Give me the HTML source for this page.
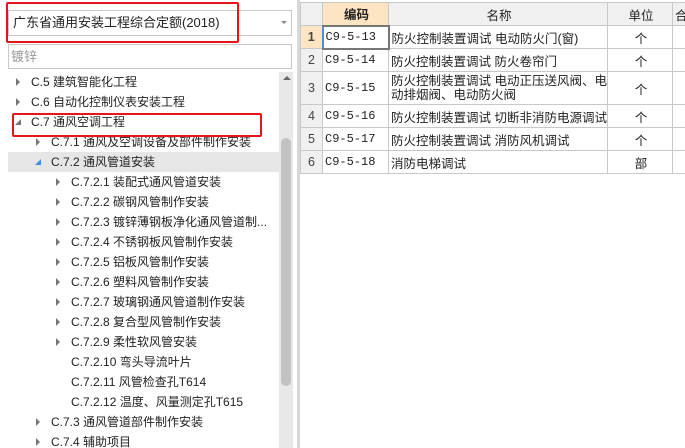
<!DOCTYPE html>
<html><head><meta charset="utf-8"><style>
*{margin:0;padding:0;box-sizing:border-box}
body{width:685px;height:448px;overflow:hidden;background:#fff;font-family:"Liberation Sans","Noto Sans CJK SC",sans-serif;font-size:12px;color:#222;position:relative}
.abs{position:absolute}
.tr{position:absolute;left:0;width:279px;height:20px;line-height:20px;white-space:nowrap}
.ar{position:absolute;top:6px;width:0;height:0;border-top:4px solid transparent;border-bottom:4px solid transparent;border-left:4px solid #777}
.dn{position:absolute;top:7px;width:0;height:0;border-left:6px solid transparent;border-bottom:6px solid #777}
table{border-collapse:collapse;position:absolute;left:300px;top:2px;table-layout:fixed;width:423px}
td,th{border:1px solid #c8c8c8;font-weight:normal;padding:0 0 0 2px;font-size:12.5px;white-space:nowrap;overflow:hidden}
th{background:#f0f0f0;height:23px;text-align:center}
td{height:23px}
td.n{background:#f0f0f0;text-align:center;color:#444;padding:0}
td.c{font-family:"Liberation Mono","Noto Sans CJK SC",monospace;font-size:12px}
td.u{text-align:center}
</style></head><body>
<div class="abs" style="left:8px;top:10px;width:284px;height:26px;border:1px solid #c8c8c8;line-height:24px;padding-left:4px;font-size:13px">广东省通用安装工程综合定额(2018)</div>
<div class="abs" style="left:281px;top:21px;border-left:3px solid transparent;border-right:3px solid transparent;border-top:3px solid #888"></div>
<div class="abs" style="left:6px;top:2px;width:233px;height:41px;border:2px solid #e8141c;border-radius:2px"></div>
<div class="abs" style="left:8px;top:44px;width:284px;height:25px;border:1px solid #c8c8c8;line-height:23px;padding-left:2px;color:#999;font-size:13px">镀锌</div>
<div class="abs" style="left:8px;top:72px;width:290px;height:376px;overflow:hidden">
 <div class="tr" style="top:0"><span class="ar" style="left:8px"></span><span style="position:absolute;left:23px">C.5 建筑智能化工程</span></div>
 <div class="tr" style="top:20px"><span class="ar" style="left:8px"></span><span style="position:absolute;left:23px">C.6 自动化控制仪表安装工程</span></div>
 <div class="tr" style="top:40px"><span class="dn" style="left:7px"></span><span style="position:absolute;left:23px">C.7 通风空调工程</span></div>
 <div class="tr" style="top:60px"><span class="ar" style="left:28px"></span><span style="position:absolute;left:43px">C.7.1 通风及空调设备及部件制作安装</span></div>
 <div class="tr" style="top:80px;background:#e6e6e6"><span class="dn" style="left:27px;border-bottom-color:#3d8fe0"></span><span style="position:absolute;left:43px">C.7.2 通风管道安装</span></div>
 <div class="tr" style="top:100px"><span class="ar" style="left:48px"></span><span style="position:absolute;left:63px">C.7.2.1 装配式通风管道安装</span></div>
 <div class="tr" style="top:120px"><span class="ar" style="left:48px"></span><span style="position:absolute;left:63px">C.7.2.2 碳钢风管制作安装</span></div>
 <div class="tr" style="top:140px"><span class="ar" style="left:48px"></span><span style="position:absolute;left:63px">C.7.2.3 镀锌薄钢板净化通风管道制...</span></div>
 <div class="tr" style="top:160px"><span class="ar" style="left:48px"></span><span style="position:absolute;left:63px">C.7.2.4 不锈钢板风管制作安装</span></div>
 <div class="tr" style="top:180px"><span class="ar" style="left:48px"></span><span style="position:absolute;left:63px">C.7.2.5 铝板风管制作安装</span></div>
 <div class="tr" style="top:200px"><span class="ar" style="left:48px"></span><span style="position:absolute;left:63px">C.7.2.6 塑料风管制作安装</span></div>
 <div class="tr" style="top:220px"><span class="ar" style="left:48px"></span><span style="position:absolute;left:63px">C.7.2.7 玻璃钢通风管道制作安装</span></div>
 <div class="tr" style="top:240px"><span class="ar" style="left:48px"></span><span style="position:absolute;left:63px">C.7.2.8 复合型风管制作安装</span></div>
 <div class="tr" style="top:260px"><span class="ar" style="left:48px"></span><span style="position:absolute;left:63px">C.7.2.9 柔性软风管安装</span></div>
 <div class="tr" style="top:280px"><span style="position:absolute;left:63px">C.7.2.10 弯头导流叶片</span></div>
 <div class="tr" style="top:300px"><span style="position:absolute;left:63px">C.7.2.11 风管检查孔T614</span></div>
 <div class="tr" style="top:320px"><span style="position:absolute;left:63px">C.7.2.12 温度、风量测定孔T615</span></div>
 <div class="tr" style="top:340px"><span class="ar" style="left:28px"></span><span style="position:absolute;left:43px">C.7.3 通风管道部件制作安装</span></div>
 <div class="tr" style="top:360px"><span class="ar" style="left:28px"></span><span style="position:absolute;left:43px">C.7.4 辅助项目</span></div>
</div>
<div class="abs" style="left:279px;top:72px;width:14px;height:376px;background:#e8e8e8"></div>
<div class="abs" style="left:283px;top:76px;border-left:4px solid transparent;border-right:4px solid transparent;border-bottom:4px solid #666"></div>
<div class="abs" style="left:281px;top:138px;width:10px;height:248px;background:#c2c2c2;border-radius:5px"></div>
<div class="abs" style="left:12px;top:113px;width:250px;height:24px;border:2px solid #e8141c;border-radius:2px"></div>
<div class="abs" style="left:297px;top:0;width:3px;height:448px;background:#d8d8d8"></div>
<table>
<colgroup><col style="width:22px"><col style="width:66px"><col style="width:219px"><col style="width:65px"><col style="width:51px"></colgroup>
<tr><th></th><th style="background:#fde5c4;font-weight:bold">编码</th><th>名称</th><th>单位</th><th style="text-align:left">合</th></tr>
<tr><td class="n" style="background:#fde5c4;font-weight:bold">1</td><td class="c" style="border:2px solid #777;border-left-color:#4a90e2">C9-5-13</td><td>防火控制装置调试 电动防火门(窗)</td><td class="u">个</td><td></td></tr>
<tr><td class="n">2</td><td class="c">C9-5-14</td><td>防火控制装置调试 防火卷帘门</td><td class="u">个</td><td></td></tr>
<tr><td class="n" style="height:33px">3</td><td class="c">C9-5-15</td><td style="white-space:normal;line-height:14px">防火控制装置调试 电动正压送风阀、电动排烟阀、电动防火阀</td><td class="u">个</td><td></td></tr>
<tr><td class="n">4</td><td class="c">C9-5-16</td><td>防火控制装置调试 切断非消防电源调试</td><td class="u">个</td><td></td></tr>
<tr><td class="n">5</td><td class="c">C9-5-17</td><td>防火控制装置调试 消防风机调试</td><td class="u">个</td><td></td></tr>
<tr><td class="n">6</td><td class="c">C9-5-18</td><td>消防电梯调试</td><td class="u">部</td><td></td></tr>
</table>
</body></html>
